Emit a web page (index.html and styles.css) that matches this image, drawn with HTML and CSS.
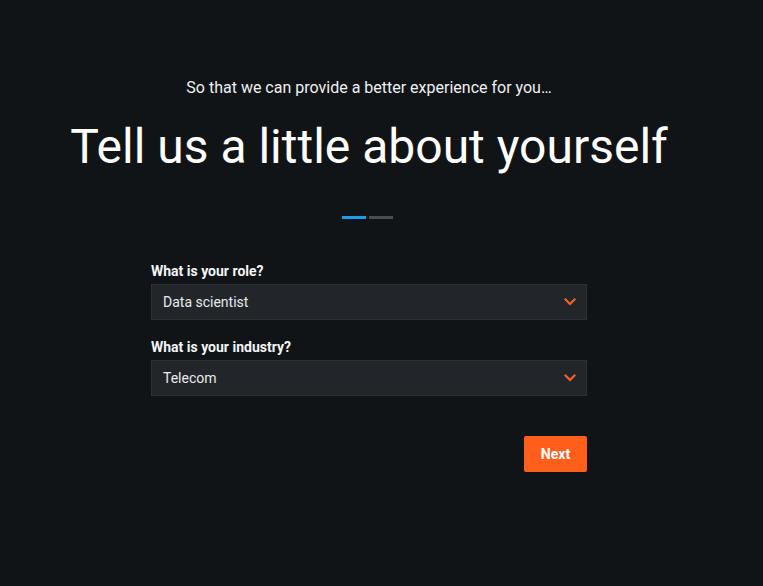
FILE: index.html
```html
<!DOCTYPE html>
<html>
<head>
<meta charset="utf-8">
<link rel="stylesheet" href="styles.css">
</head>
<body>
<main class="page">
  <p class="subtitle">So that we can provide a better experience for you…</p>
  <h1 class="title">Tell us a little about yourself</h1>
  <div class="steps">
    <span class="step active"></span>
    <span class="step"></span>
  </div>
  <form class="form">
    <div class="field">
      <label class="label">What is your role?</label>
      <div class="select">
        <span class="value">Data scientist</span>
        <svg class="chevron" width="12" height="8" viewBox="0 0 12 8"><path d="M1.5 1.5 L6 6 L10.5 1.5" fill="none" stroke="#f26322" stroke-width="2.2" stroke-linecap="square"/></svg>
      </div>
    </div>
    <div class="field">
      <label class="label">What is your industry?</label>
      <div class="select">
        <span class="value">Telecom</span>
        <svg class="chevron" width="12" height="8" viewBox="0 0 12 8"><path d="M1.5 1.5 L6 6 L10.5 1.5" fill="none" stroke="#f26322" stroke-width="2.2" stroke-linecap="square"/></svg>
      </div>
    </div>
    <div class="actions">
      <button type="button" class="btn">Next</button>
    </div>
  </form>
</main>
</body>
</html>
```
FILE: styles.css
```css
html, body {
  margin: 0;
  padding: 0;
  background: #111416;
  color: #ffffff;
  font-family: Roboto, "Liberation Sans", sans-serif;
}
.page {
  width: 738px;
  height: 586px;
  display: flex;
  flex-direction: column;
  align-items: center;
  padding-top: 76px;
  box-sizing: border-box;
}
.subtitle {
  margin: 0;
  font-size: 16px;
  line-height: 24px;
  color: #eef0f1;
}
.title {
  margin: 19px 0 0;
  font-size: 48px;
  font-weight: 400;
  line-height: 56px;
}
.steps {
  display: flex;
  gap: 3px;
  margin-top: 41px;
  margin-right: 4px;
}
.step {
  width: 24px;
  height: 3px;
  background: #4a4e52;
}
.step.active {
  background: #1a9ded;
}
.form {
  width: 436px;
  margin-top: 43px;
  display: flex;
  flex-direction: column;
}
.field {
  display: flex;
  flex-direction: column;
  margin-bottom: 18px;
}
.label {
  font-size: 14px;
  font-weight: 700;
  line-height: 18px;
  color: #f4f5f6;
  margin-bottom: 4px;
}
.select {
  height: 36px;
  box-sizing: border-box;
  background: #22262a;
  border: 1px solid #2c3135;
  display: flex;
  align-items: center;
  justify-content: space-between;
  padding: 0 10px 0 11px;
}
.value {
  font-size: 14px;
  color: #e8eaec;
}
.chevron {
  display: block;
}
.actions {
  display: flex;
  justify-content: flex-end;
  margin-top: 22px;
}
.btn {
  width: 63px;
  height: 36px;
  border: none;
  border-radius: 2px;
  background: #ff5f1b;
  color: #ffffff;
  font-family: Roboto, "Liberation Sans", sans-serif;
  font-size: 14px;
  font-weight: 700;
  padding: 0;
}
```
